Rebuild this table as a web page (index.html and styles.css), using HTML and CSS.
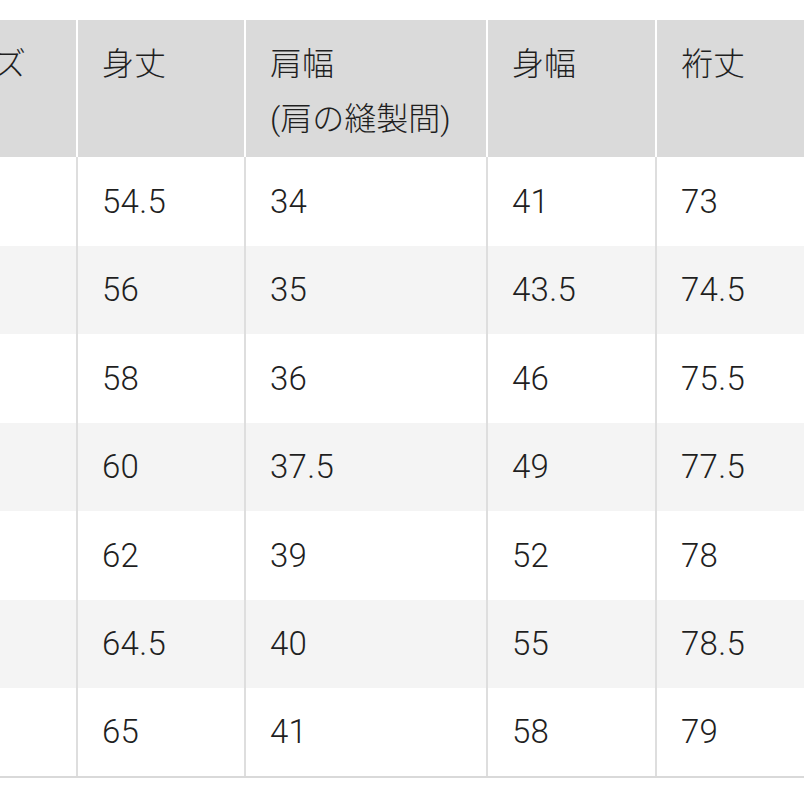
FILE: index.html
```html
<!DOCTYPE html>
<html lang="ja">
<head>
<meta charset="utf-8">
<link rel="stylesheet" href="styles.css">
</head>
<body>
<div class="wrap">
<table class="size-table">
  <colgroup>
    <col class="c-size"><col class="c-a"><col class="c-b"><col class="c-c"><col class="c-d">
  </colgroup>
  <thead>
    <tr>
      <th>サイズ</th>
      <th>身丈</th>
      <th>肩幅<br>(肩の縫製間)</th>
      <th>身幅</th>
      <th>裄丈</th>
    </tr>
  </thead>
  <tbody>
    <tr><td></td><td>54.5</td><td>34</td><td>41</td><td>73</td></tr>
    <tr><td></td><td>56</td><td>35</td><td>43.5</td><td>74.5</td></tr>
    <tr><td></td><td>58</td><td>36</td><td>46</td><td>75.5</td></tr>
    <tr><td></td><td>60</td><td>37.5</td><td>49</td><td>77.5</td></tr>
    <tr><td></td><td>62</td><td>39</td><td>52</td><td>78</td></tr>
    <tr><td></td><td>64.5</td><td>40</td><td>55</td><td>78.5</td></tr>
    <tr><td></td><td>65</td><td>41</td><td>58</td><td>79</td></tr>
  </tbody>
</table>
</div>
</body>
</html>
```
FILE: styles.css
```css
html, body {
  margin: 0;
  padding: 0;
  background: #ffffff;
}
body {
  width: 804px;
  height: 804px;
  overflow: hidden;
  font-family: "Roboto", "Noto Sans CJK JP", sans-serif;
  color: #1f1f1f;
}
.wrap {
  padding-top: 20px;
}
.size-table {
  margin-left: -93px;
  border-collapse: collapse;
  table-layout: fixed;
  width: 1000px;
  font-size: 32px;
}
.c-size { width: 170px; }
.c-a { width: 168px; }
.c-b { width: 242px; }
.c-c { width: 169px; }
.c-d { width: 251px; }

.size-table th {
  background: #dadada;
  font-weight: 300;
  text-align: left;
  vertical-align: top;
  height: 137px;
  box-sizing: border-box;
  padding: 17px 10px 0 24px;
  line-height: 55px;
  border-left: 2px solid #ffffff;
  white-space: nowrap;
}
.size-table th:first-child {
  border-left: none;
}
.size-table td {
  height: 88.5px;
  box-sizing: border-box;
  padding: 0 10px 0 24px;
  text-align: left;
  vertical-align: middle;
  border-left: 2px solid #dedede;
  font-weight: 300;
  font-size: 33px;
  letter-spacing: 0.3px;
}
.size-table td:first-child {
  border-left: none;
}
.size-table tbody tr:nth-child(even) td {
  background: #f4f4f4;
}
.size-table tbody tr:last-child td {
  border-bottom: 2px solid #d9d9d9;
}
```
